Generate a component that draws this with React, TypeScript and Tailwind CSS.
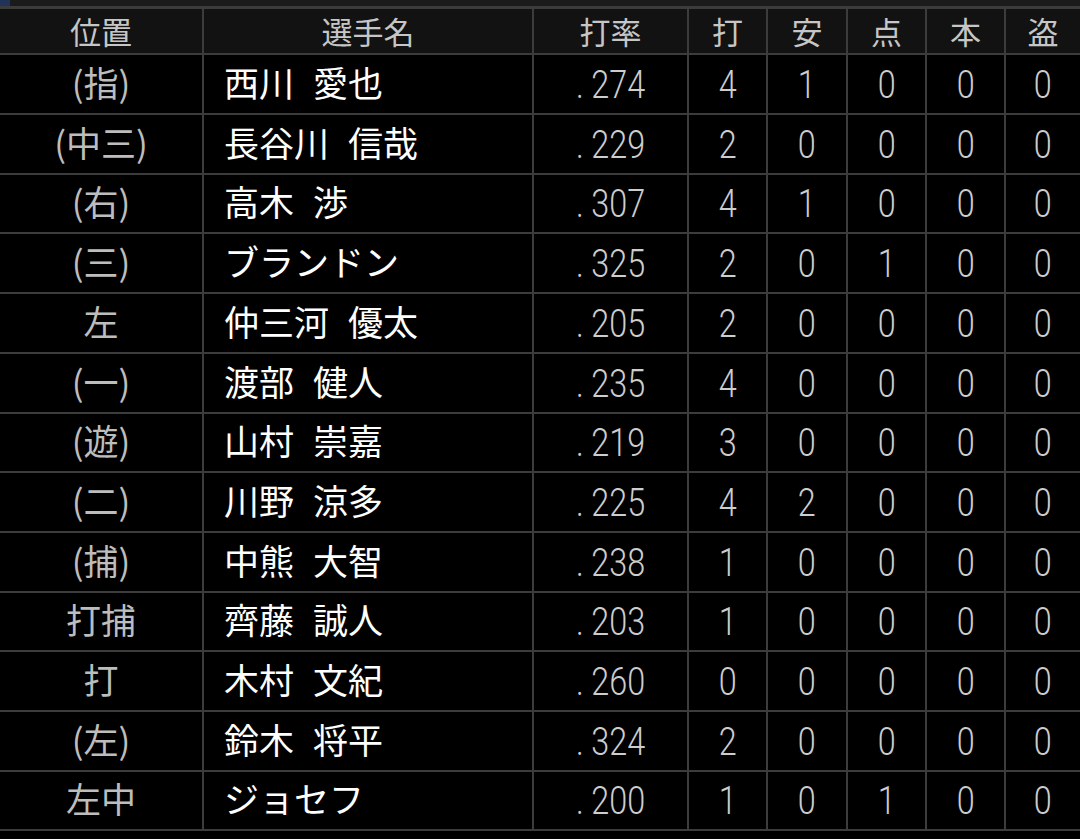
import React from "react";

type Row = { pos: string; last: string; first?: string; avg: string; s: number[] };

const rows: Row[] = [
  { pos: "(指)", last: "西川", first: "愛也", avg: "274", s: [4, 1, 0, 0, 0] },
  { pos: "(中三)", last: "長谷川", first: "信哉", avg: "229", s: [2, 0, 0, 0, 0] },
  { pos: "(右)", last: "高木", first: "渉", avg: "307", s: [4, 1, 0, 0, 0] },
  { pos: "(三)", last: "ブランドン", avg: "325", s: [2, 0, 1, 0, 0] },
  { pos: "左", last: "仲三河", first: "優太", avg: "205", s: [2, 0, 0, 0, 0] },
  { pos: "(一)", last: "渡部", first: "健人", avg: "235", s: [4, 0, 0, 0, 0] },
  { pos: "(遊)", last: "山村", first: "崇嘉", avg: "219", s: [3, 0, 0, 0, 0] },
  { pos: "(二)", last: "川野", first: "涼多", avg: "225", s: [4, 2, 0, 0, 0] },
  { pos: "(捕)", last: "中熊", first: "大智", avg: "238", s: [1, 0, 0, 0, 0] },
  { pos: "打捕", last: "齊藤", first: "誠人", avg: "203", s: [1, 0, 0, 0, 0] },
  { pos: "打", last: "木村", first: "文紀", avg: "260", s: [0, 0, 0, 0, 0] },
  { pos: "(左)", last: "鈴木", first: "将平", avg: "324", s: [2, 0, 0, 0, 0] },
  { pos: "左中", last: "ジョセフ", avg: "200", s: [1, 0, 1, 0, 0] },
];

const headers = ["位置", "選手名", "打率", "打", "安", "点", "本", "盗"];

const jp = { fontFamily: '"Noto Sans CJK JP", "Noto Sans", sans-serif' };
const num = { fontFamily: 'Roboto, "Noto Sans", sans-serif' };

function Num({ children }: { children: React.ReactNode }) {
  return (
    <span
      className="inline-block scale-x-[0.83] text-[39px] font-light leading-none text-[#cdcdcd] translate-y-[1px]"
      style={num}
    >
      {children}
    </span>
  );
}

export default function App() {
  return (
    <div className="w-[1080px] h-[839px] bg-black overflow-hidden">
      <div className="h-[6px] bg-[#1b1b1b] flex">
        <div className="w-[10px] h-[6px] bg-[#22335a]" />
      </div>
      <div
        className="grid gap-[2px] bg-[#3c3c3c] border-t-[3px] border-b-[2px] border-[#3c3c3c] grid-cols-[202px_328px_153px_77px_78px_77px_77px_1fr] grid-rows-[44px_58px_58px_57px_58px_58px_58px_57px_58px_58px_57px_58px_58px_57px]"
        style={jp}
      >
        {headers.map((h) => (
          <div
            key={h}
            className="bg-[#121212] flex items-center justify-center text-[31px] leading-none text-[#c6c6c6]"
          >
            <span className="-translate-y-[1px]">{h}</span>
          </div>
        ))}
        {rows.map((r, i) => (
          <React.Fragment key={i}>
            <div className="bg-black flex items-center justify-center text-[35px] leading-none text-[#bdbdbd]">
              <span className="-translate-y-[3px]">{r.pos}</span>
            </div>
            <div className="bg-black flex items-center pl-[20px] gap-[19px] text-[35px] leading-none text-white">
              <span className="-translate-y-[3px]">{r.last}</span>
              {r.first && <span className="-translate-y-[3px]">{r.first}</span>}
            </div>
            <div className="bg-black flex items-center justify-center">
              <Num>
                <span className="mr-[9px]">.</span>
                {r.avg}
              </Num>
            </div>
            {r.s.map((v, j) => (
              <div key={j} className="bg-black flex items-center justify-center">
                <Num>{v}</Num>
              </div>
            ))}
          </React.Fragment>
        ))}
      </div>
    </div>
  );
}
